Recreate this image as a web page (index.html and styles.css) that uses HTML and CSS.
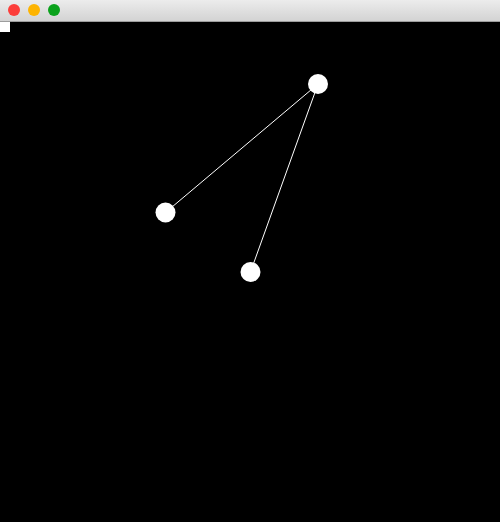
FILE: index.html
```html
<!DOCTYPE html>
<html>
<head>
<meta charset="utf-8">
<link rel="stylesheet" href="styles.css">
</head>
<body>
<div class="window">
  <div class="titlebar">
    <span class="light red"></span>
    <span class="light yellow"></span>
    <span class="light green"></span>
  </div>
  <div class="canvas">
    <div class="marker"></div>
    <svg class="graph" width="500" height="500" viewBox="0 22 500 500">
      <line x1="318" y1="84" x2="165.5" y2="212.5" stroke="#fff" stroke-width="1"/>
      <line x1="318" y1="84" x2="250.5" y2="272" stroke="#fff" stroke-width="1"/>
      <circle cx="318" cy="84" r="10" fill="#fff"/>
      <circle cx="165.5" cy="212.5" r="10" fill="#fff"/>
      <circle cx="250.5" cy="272" r="10" fill="#fff"/>
    </svg>
  </div>
</div>
</body>
</html>
```
FILE: styles.css
```css
html, body {
  margin: 0;
  padding: 0;
  background: #000;
  font-family: "Liberation Sans", sans-serif;
}
.window {
  width: 500px;
  height: 522px;
  display: flex;
  flex-direction: column;
  overflow: hidden;
}
.titlebar {
  height: 21px;
  flex: none;
  display: flex;
  align-items: center;
  gap: 8px;
  padding-left: 8px;
  background: linear-gradient(#ececec, #d3d3d3);
  border-bottom: 1px solid #9d9d9d;
}
.light {
  width: 12px;
  height: 12px;
  border-radius: 50%;
  margin-top: -1px;
}
.red { background: #fc3e3a; }
.yellow { background: #fdb401; }
.green { background: #0ba21c; }
.canvas {
  position: relative;
  flex: 1;
  background: #000;
}
.marker {
  position: absolute;
  left: 0;
  top: 0;
  width: 10px;
  height: 10px;
  background: #fff;
}
.graph {
  display: block;
}
```
